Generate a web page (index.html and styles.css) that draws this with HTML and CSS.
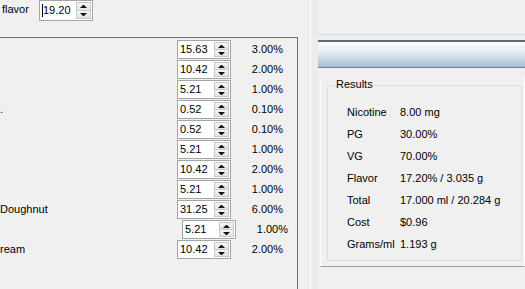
FILE: index.html
```html
<!DOCTYPE html>
<html lang="en">
<head>
    <meta charset="UTF-8">
    <title>Recipe Calculator</title>
    <link rel="stylesheet" href="styles.css">
</head>
<body>
<div class="left">
    <div class="topbar">
        <span class="topbar-label">flavor</span>
        <div class="spin spin-top">
            <span class="spin-value"><span class="caret"></span>19.20</span>
            <span class="spin-btns"><span class="spin-btn up"></span><span class="spin-btn down"></span></span>
        </div>
    </div>
    <div class="panel">
        <div class="row">
            <span class="row-label"></span>
            <div class="spin"><span class="spin-value">15.63</span><span class="spin-btns"><span class="spin-btn up"></span><span class="spin-btn down"></span></span></div>
            <span class="row-pct">3.00%</span>
        </div>
        <div class="row">
            <span class="row-label"></span>
            <div class="spin"><span class="spin-value">10.42</span><span class="spin-btns"><span class="spin-btn up"></span><span class="spin-btn down"></span></span></div>
            <span class="row-pct">2.00%</span>
        </div>
        <div class="row">
            <span class="row-label"></span>
            <div class="spin"><span class="spin-value">5.21</span><span class="spin-btns"><span class="spin-btn up"></span><span class="spin-btn down"></span></span></div>
            <span class="row-pct">1.00%</span>
        </div>
        <div class="row">
            <span class="row-label">.</span>
            <div class="spin"><span class="spin-value">0.52</span><span class="spin-btns"><span class="spin-btn up"></span><span class="spin-btn down"></span></span></div>
            <span class="row-pct">0.10%</span>
        </div>
        <div class="row">
            <span class="row-label"></span>
            <div class="spin"><span class="spin-value">0.52</span><span class="spin-btns"><span class="spin-btn up"></span><span class="spin-btn down"></span></span></div>
            <span class="row-pct">0.10%</span>
        </div>
        <div class="row">
            <span class="row-label"></span>
            <div class="spin"><span class="spin-value">5.21</span><span class="spin-btns"><span class="spin-btn up"></span><span class="spin-btn down"></span></span></div>
            <span class="row-pct">1.00%</span>
        </div>
        <div class="row">
            <span class="row-label"></span>
            <div class="spin"><span class="spin-value">10.42</span><span class="spin-btns"><span class="spin-btn up"></span><span class="spin-btn down"></span></span></div>
            <span class="row-pct">2.00%</span>
        </div>
        <div class="row">
            <span class="row-label"></span>
            <div class="spin"><span class="spin-value">5.21</span><span class="spin-btns"><span class="spin-btn up"></span><span class="spin-btn down"></span></span></div>
            <span class="row-pct">1.00%</span>
        </div>
        <div class="row">
            <span class="row-label">Doughnut</span>
            <div class="spin"><span class="spin-value">31.25</span><span class="spin-btns"><span class="spin-btn up"></span><span class="spin-btn down"></span></span></div>
            <span class="row-pct">6.00%</span>
        </div>
        <div class="row row-shift">
            <span class="row-label"></span>
            <div class="spin"><span class="spin-value">5.21</span><span class="spin-btns"><span class="spin-btn up"></span><span class="spin-btn down"></span></span></div>
            <span class="row-pct">1.00%</span>
        </div>
        <div class="row">
            <span class="row-label">ream</span>
            <div class="spin"><span class="spin-value">10.42</span><span class="spin-btns"><span class="spin-btn up"></span><span class="spin-btn down"></span></span></div>
            <span class="row-pct">2.00%</span>
        </div>
    </div>
</div>

<div class="splitter"></div>

<div class="right">
    <div class="right-top"></div>
    <div class="header-bar"></div>
    <div class="frame">
        <div class="group">
            <span class="group-title">Results</span>
            <div class="results">
                <span>Nicotine</span><span>8.00 mg</span>
                <span>PG</span><span>30.00%</span>
                <span>VG</span><span>70.00%</span>
                <span>Flavor</span><span>17.20% / 3.035 g</span>
                <span>Total</span><span>17.000 ml / 20.284 g</span>
                <span>Cost</span><span>$0.96</span>
                <span>Grams/ml</span><span>1.193 g</span>
            </div>
        </div>
    </div>
</div>
</body>
</html>
```

FILE: styles.css
```css
body {
    margin: 0;
    width: 525px;
    height: 289px;
    overflow: hidden;
    background-color: #f0f0f0;
    font-family: "Liberation Sans", Arial, sans-serif;
    font-size: 11px;
    color: #000;
    display: flex;
}

/* Left column: flavor input + ingredient list */
.left {
    flex: none;
    width: 298px;
    display: flex;
    flex-direction: column;
}

.topbar {
    height: 37px;
    display: flex;
    align-items: flex-start;
}

.topbar-label {
    margin: 3px 0 0 2px;
    width: 37px;
}

.panel {
    flex: 1;
    border-top: 1px solid #6d6d6d;
    border-right: 1px solid #6d6d6d;
    padding-top: 2px;
}

.row {
    display: flex;
    align-items: flex-start;
    height: 20px;
}

.row-shift {
    padding-left: 5px;
}

.row-label {
    flex: none;
    width: 177px;
    line-height: 19px;
    white-space: nowrap;
    overflow: hidden;
}

.row-pct {
    width: 52px;
    text-align: right;
    line-height: 19px;
}

/* Spin box */
.spin {
    flex: none;
    display: flex;
    width: 54px;
    height: 19px;
    border: 1px solid #a5a5a5;
    background-color: #fff;
    box-sizing: border-box;
}

.spin-top {
    height: 21px;
}

.spin-value {
    flex: 1;
    padding-left: 2px;
    line-height: 17px;
    display: flex;
    align-items: center;
}

.spin-top .spin-value {
    line-height: 19px;
}

.caret {
    width: 1px;
    height: 13px;
    background-color: #000;
}

.spin-btns {
    width: 15px;
    margin: 1px 1px 1px 0;
    display: flex;
    flex-direction: column;
}

.spin-btn {
    flex: 1;
    display: flex;
    align-items: center;
    justify-content: center;
    border: 1px solid #c9c9c9;
    background: linear-gradient(#f6f6f6, #e2e2e2);
}

.spin-btn.down {
    border-top: none;
}

.spin-btn::after {
    content: "";
    width: 1px;
    border-left: 3px solid transparent;
    border-right: 3px solid transparent;
}

.spin-btn.up::after {
    border-bottom: 3px solid #111;
}

.spin-btn.down::after {
    border-top: 3px solid #111;
}

/* Splitter between columns */
.splitter {
    flex: none;
    width: 7px;
    margin-left: 12px;
    border-left: 1px solid #fff;
    background-color: #ececec;
}

/* Right column: results */
.right {
    flex: 1;
    display: flex;
    flex-direction: column;
}

.right-top {
    height: 34px;
    border-bottom: 1px solid #d9d9d9;
}

.header-bar {
    margin-top: 5px;
    height: 28px;
    box-sizing: border-box;
    border-top: 2px solid #5b6877;
    border-bottom: 1px solid #6f8193;
    background: linear-gradient(#fbfcfe, #e4ecf5 40%, #a7bdd5);
}

.frame {
    margin: 9px 0 0 2px;
    height: 190px;
    box-sizing: border-box;
    border-left: 1px solid #fdfdfd;
    border-bottom: 1px solid #a0a0a0;
    border-right: 1px solid #fdfdfd;
    padding-top: 8px;
}

.group {
    position: relative;
    margin-left: 6px;
    width: 195px;
    height: 176px;
    box-sizing: border-box;
    border: 1px solid #d5dfe5;
    border-radius: 3px;
    padding: 15px 0 0 19px;
}

.group-title {
    position: absolute;
    top: -8px;
    left: 7px;
    padding: 0 1px;
    background-color: #f0f0f0;
}

.results {
    display: grid;
    grid-template-columns: 53px auto;
    grid-auto-rows: 22px;
    align-items: center;
}
```
